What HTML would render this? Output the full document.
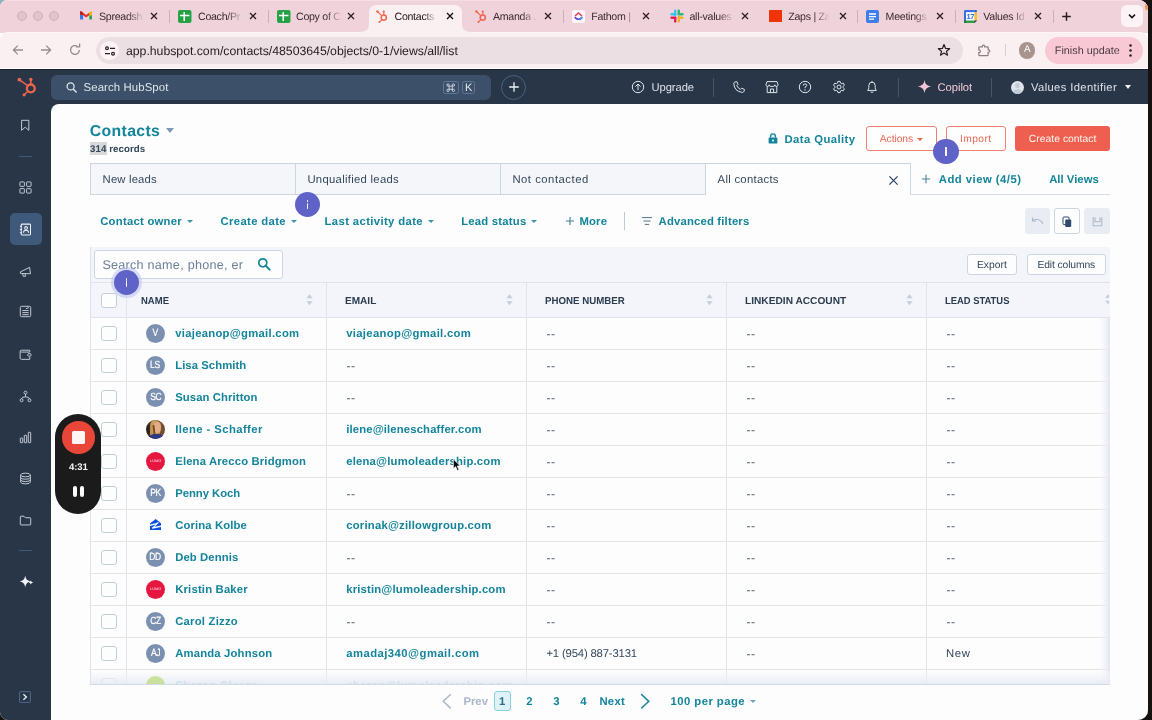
<!DOCTYPE html>
<html><head><meta charset="utf-8">
<style>
*{box-sizing:border-box;margin:0;padding:0}
html,body{text-rendering:geometricPrecision;width:1152px;height:720px;overflow:hidden;background:#17110f;font-family:"Liberation Sans",sans-serif;}
.abs{position:absolute}
#win{position:absolute;left:0;top:0;width:1148px;height:720px;background:#fdfdfe;overflow:hidden;will-change:transform;border-radius:7px 9px 10px 8px}
/* browser chrome */
#tabbar{position:absolute;left:0;top:0;width:1148px;height:33px;background:#f0d2da}
#toolbar{position:absolute;left:0;top:32px;width:1148px;height:37px;background:#faf0f1;border-top:1px solid #fdf5f6;border-bottom:1px solid #fff;border-radius:8px 8px 0 0}
.tab{position:absolute;top:0;height:32px;font-size:10.6px;color:#3a2a30;white-space:nowrap;letter-spacing:-0.27px}
.tab .t{position:absolute;top:9.7px;left:0;width:38px;overflow:hidden;height:16px;line-height:14px}
.tsep{position:absolute;top:10px;width:1px;height:13px;background:#cbb0b8}
.tx{position:absolute;top:10px;width:12px;height:12px}
#urlbar{position:absolute;left:96px;top:37px;width:867px;height:27px;border-radius:14px;background:#ecdfe4}
#url{position:absolute;left:126px;top:43.8px;font-size:12.3px;color:#251a1e;letter-spacing:0.05px;white-space:nowrap;line-height:14px}
/* hubspot nav */
#hsnav{position:absolute;left:0;top:69.3px;width:1148px;height:650.7px;background:#283648;border-top:1.6px solid #16222f}
#hsearch{position:absolute;left:51.2px;top:74.5px;width:440px;height:25.3px;border-radius:6px;background:#3d5069}
#content{position:absolute;left:51px;top:104px;width:1097px;height:616px;background:#fdfdfe;border-radius:8px 0 0 0}
.navtxt{position:absolute;color:#dce1ea;font-size:11.5px;white-space:nowrap;line-height:14px}
.nsep{position:absolute;top:78px;width:1px;height:18.5px;background:#45566b}
/* content */
.teal{color:#13849a}
.b{font-weight:bold}
.lnk{position:absolute;font-weight:bold;color:#13849a;font-size:12.3px;white-space:nowrap;line-height:16px}
.txt{position:absolute;color:#33475b;font-size:12.3px;white-space:nowrap;line-height:16px}
.caret{position:absolute;width:0;height:0;border-left:3.5px solid transparent;border-right:3.5px solid transparent;border-top:4px solid #3e95a8}
.vtab{position:absolute;top:163.3px;height:31.7px;width:206px;background:#f4f6fa;border:1px solid #ccd6e3;font-size:12.3px;color:#33475b;line-height:29px;padding-left:12px}
.btn-o{position:absolute;top:126px;height:25.4px;border:1px solid #ef7f6e;border-radius:3px;color:#ee6a58;font-size:11px;line-height:24px;text-align:center;background:#fefefe}
.sbtn{position:absolute;top:253px;height:22px;border:1px solid #cbd6e2;border-radius:3px;background:#fdfdfe;color:#33475b;font-size:11px;line-height:20px;text-align:center}
.ibtn{position:absolute;top:208px;width:26px;height:26px;border-radius:3px;background:#e9edf3}
/* table */
#tbl{position:absolute;left:90px;top:246.5px;width:1020px;height:438.5px;background:#fdfdfe;border:1px solid #dde2ea;overflow:hidden}
.th{position:absolute;top:294.8px;font-size:10.05px;font-weight:bold;color:#2b3c4f;white-space:nowrap;line-height:14px}
.vline{position:absolute;top:282px;width:1.1px;height:403px;background:#e1e2ea}
.hline{position:absolute;left:90px;width:1019px;height:1.1px;background:#e3e4e8}
.cb{position:absolute;left:101px;width:16px;height:16px;border:1.5px solid #c3cdda;border-radius:3px;background:#fdfdfe}
.av{position:absolute;left:146px;width:19.2px;height:19.2px;border-radius:50%;background:#7b90b0;color:#fff;font-size:10.4px;line-height:19.9px;text-align:center}
.av span{display:inline-block;transform:scaleX(.82);letter-spacing:-0.45px;-webkit-text-stroke:.22px #fff;margin-left:-.4px}
.dd{position:absolute;color:#485b70;font-size:12.3px;line-height:16px;letter-spacing:0.5px}
.sort{position:absolute;top:294px;width:7px;height:12px}
.ibub{position:absolute;width:25.4px;height:25.4px;border-radius:50%;background:#5f62c6}
.ibub i{position:absolute;left:11.8px;top:8.1px;width:1.9px;height:2px;background:#fff;border-radius:.6px}
.ibub b{position:absolute;left:11.8px;top:10.7px;width:1.9px;height:6.5px;background:#fff;border-radius:.4px}
</style></head><body>
<div class="abs" style="left:0;top:0;width:10px;height:10px;background:#8fafbf"></div>
<div id="win">
<div id="tabbar"></div><div class="abs" style="left:6px;top:0;width:1136px;height:1px;background:#f5dde3"></div>
<div id="toolbar"></div>
<div id="urlbar"></div>
<div id="url" style="letter-spacing:-0.030px;">app.hubspot.com/contacts/48503645/objects/0-1/views/all/list</div>
<div id="hsnav"></div>
<div id="hsearch"></div>
<div id="content"></div>
<!--CHROME_START-->
<!-- window corner bits -->
<div class="abs" style="left:1145px;top:4px;width:4px;height:6px;border-radius:2px;background:#e99a4a"></div>
<!-- traffic lights -->
<div class="abs" style="left:16.6px;top:11.3px;width:10px;height:10px;border-radius:50%;background:#dcc6cb;border:0.6px solid #ccb2b9"></div>
<div class="abs" style="left:32.6px;top:11.3px;width:10px;height:10px;border-radius:50%;background:#dcc6cb;border:0.6px solid #ccb2b9"></div>
<div class="abs" style="left:48.6px;top:11.3px;width:10px;height:10px;border-radius:50%;background:#dcc6cb;border:0.6px solid #ccb2b9"></div>
<!-- active tab -->
<svg class="abs" style="left:360px;top:0" width="112" height="33" viewBox="0 0 112 33"><path d="M0 33 L0 32 Q9 32 9 24 L9 13 Q9 5 17 5 L94 5 Q102 5 102 13 L102 24 Q102 32 111 32 L112 33 Z" fill="#faf0f1"/></svg>
<!-- tab 1 gmail -->
<svg class="abs" style="left:80.3px;top:11.3px" width="12.2" height="8.8" viewBox="0 0 14 11" preserveAspectRatio="none"><path d="M0 4.6 V10 Q0 10.6 .6 10.6 H3.6 V4.6 Z" fill="#3b78e7"/><path d="M10.6 5.4 H14 V10 Q14 10.6 13.4 10.6 H10.6 Z" fill="#2ea44f"/><path d="M10.6 1.8 L12.6 .4 Q14 .2 14 1.6 V5.4 H10.6 Z" fill="#f2b50b"/><path d="M0 1.6 Q0 .2 1.4 .4 L7 4.9 L12.6 .4 L10.6 1.8 V5.2 L7 8.2 L3.6 5.2 V4.6 H0 Z" fill="#e53027"/><path d="M0 1.6 V4.8 L3.6 4.8 L3.6 2.2 L1.5 .5 Q0 .2 0 1.6Z" fill="#b8201c"/></svg>
<div class="tab" style="left:99px"><div class="t" style="width:44px">Spreadsh</div></div>
<div class="abs" style="left:128px;top:8px;width:16px;height:16px;background:linear-gradient(90deg,rgba(240,210,218,0),#f0d2da)"></div>
<svg class="tx" style="left:148px" viewBox="0 0 12 12"><path d="M3 3 L9 9 M9 3 L3 9" stroke="#2b1c22" stroke-width="1.25" fill="none"/></svg>
<div class="tsep" style="left:169px"></div>
<!-- tab 2 sheets -->
<svg class="abs" style="left:178px;top:9.5px" width="13.5" height="13" viewBox="0 0 13.5 13"><rect x="0" y="0" width="13.5" height="13" rx="2" fill="#2da94f"/><rect x="0.6" y="0.6" width="12.3" height="11.8" rx="1.6" fill="#23a144"/><path d="M6.2 2 V11 M2 5.6 H11.5" stroke="#fff" stroke-width="1.5" fill="none"/></svg>
<div class="tab" style="left:198px"><div class="t" style="width:44px">Coach/Pr</div></div>
<div class="abs" style="left:227px;top:8px;width:16px;height:16px;background:linear-gradient(90deg,rgba(240,210,218,0),#f0d2da)"></div>
<svg class="tx" style="left:246.8px" viewBox="0 0 12 12"><path d="M3 3 L9 9 M9 3 L3 9" stroke="#2b1c22" stroke-width="1.25" fill="none"/></svg>
<div class="tsep" style="left:268px"></div>
<!-- tab 3 sheets -->
<svg class="abs" style="left:277px;top:9.5px" width="13.5" height="13" viewBox="0 0 13.5 13"><rect x="0" y="0" width="13.5" height="13" rx="2" fill="#2da94f"/><rect x="0.6" y="0.6" width="12.3" height="11.8" rx="1.6" fill="#23a144"/><path d="M6.2 2 V11 M2 5.6 H11.5" stroke="#fff" stroke-width="1.5" fill="none"/></svg>
<div class="tab" style="left:296px"><div class="t" style="width:44px">Copy of C</div></div>
<div class="abs" style="left:326px;top:8px;width:16px;height:16px;background:linear-gradient(90deg,rgba(240,210,218,0),#f0d2da)"></div>
<svg class="tx" style="left:345px" viewBox="0 0 12 12"><path d="M3 3 L9 9 M9 3 L3 9" stroke="#2b1c22" stroke-width="1.25" fill="none"/></svg>
<!-- tab 4 active hubspot -->
<svg class="abs" style="left:376px;top:9.5px" width="12" height="13" viewBox="0 0 12 13"><g fill="none" stroke="#f0644d" stroke-width="1.1"><circle cx="7.8" cy="7.6" r="2.6" stroke-width="1.5"/><path d="M1.4 1.5 L5.8 5.6 M7.8 1.6 V5 M5.8 9.6 L3.6 11.8"/></g><circle cx="1.4" cy="1.5" r="1.2" fill="#f0644d"/><circle cx="7.8" cy="1.5" r="1.1" fill="#f0644d"/><circle cx="3.4" cy="11.9" r="1" fill="#f0644d"/></svg>
<div class="tab" style="left:394.5px;color:#201418"><div class="t" style="width:42px">Contacts</div></div>
<div class="abs" style="left:424px;top:8px;width:13px;height:16px;background:linear-gradient(90deg,rgba(250,240,241,0),#faf0f1)"></div>
<svg class="tx" style="left:443.5px" viewBox="0 0 12 12"><path d="M3 3 L9 9 M9 3 L3 9" stroke="#1c1014" stroke-width="1.35" fill="none"/></svg>
<!-- tab 5 hubspot -->
<svg class="abs" style="left:474.5px;top:9.5px" width="12" height="13" viewBox="0 0 12 13"><g fill="none" stroke="#f0644d" stroke-width="1.1"><circle cx="7.8" cy="7.6" r="2.6" stroke-width="1.5"/><path d="M1.4 1.5 L5.8 5.6 M7.8 1.6 V5 M5.8 9.6 L3.6 11.8"/></g><circle cx="1.4" cy="1.5" r="1.2" fill="#f0644d"/><circle cx="7.8" cy="1.5" r="1.1" fill="#f0644d"/><circle cx="3.4" cy="11.9" r="1" fill="#f0644d"/></svg>
<div class="tab" style="left:493px"><div class="t" style="width:44px">Amanda J</div></div>
<div class="abs" style="left:522px;top:8px;width:15px;height:16px;background:linear-gradient(90deg,rgba(240,210,218,0),#f0d2da)"></div>
<svg class="tx" style="left:542px" viewBox="0 0 12 12"><path d="M3 3 L9 9 M9 3 L3 9" stroke="#2b1c22" stroke-width="1.25" fill="none"/></svg>
<div class="tsep" style="left:563px"></div>
<!-- tab 6 fathom -->
<svg class="abs" style="left:572px;top:9.5px" width="13" height="13" viewBox="0 0 13 13"><rect width="13" height="13" rx="2.5" fill="#fdf7fb"/><path d="M3.4 5.6 L6.5 3 L9.6 5.6" stroke="#e8484f" stroke-width="1.5" fill="none" stroke-linecap="round"/><path d="M3.2 7.6 Q6.5 11 9.8 7.6" stroke="#5b3fd6" stroke-width="1.6" fill="none" stroke-linecap="round"/><path d="M8.2 9.4 Q9.4 8.8 9.8 7.6" stroke="#3aa0f0" stroke-width="1.6" fill="none" stroke-linecap="round"/></svg>
<div class="tab" style="left:591.2px"><div class="t" style="width:40px">Fathom |</div></div>
<div class="abs" style="left:624px;top:8px;width:10px;height:16px;background:linear-gradient(90deg,rgba(240,210,218,0),#f0d2da)"></div>
<svg class="tx" style="left:640.2px" viewBox="0 0 12 12"><path d="M3 3 L9 9 M9 3 L3 9" stroke="#2b1c22" stroke-width="1.25" fill="none"/></svg>
<!-- tab 7 slack -->
<svg class="abs" style="left:670px;top:9px" width="14" height="14" viewBox="0 0 14 14"><g stroke-width="2.4" stroke-linecap="round" fill="none"><path d="M5.2 1.6 V6" stroke="#36c5f0"/><path d="M1.6 5.2 H5" stroke="#36c5f0"/><path d="M8.8 1.6 V5" stroke="#2eb67d"/><path d="M8.8 5.2 H12.4" stroke="#2eb67d"/><path d="M8.8 8 V12.4" stroke="#ecb22e"/><path d="M9 8.8 H12.4" stroke="#ecb22e"/><path d="M5.2 9 V12.4" stroke="#e01e5a"/><path d="M1.6 8.8 H5.2" stroke="#e01e5a"/></g></svg>
<div class="tab" style="left:689.5px"><div class="t" style="width:44px">all-values</div></div>
<div class="abs" style="left:719px;top:8px;width:15px;height:16px;background:linear-gradient(90deg,rgba(240,210,218,0),#f0d2da)"></div>
<svg class="tx" style="left:738.6px" viewBox="0 0 12 12"><path d="M3 3 L9 9 M9 3 L3 9" stroke="#2b1c22" stroke-width="1.25" fill="none"/></svg>
<!-- tab 8 zapier -->
<div class="abs" style="left:768.8px;top:9.5px;width:13px;height:12.6px;background:#f03504;border-radius:.5px"></div>
<div class="tab" style="left:788.3px"><div class="t" style="width:42px">Zaps | Za</div></div>
<div class="abs" style="left:814px;top:8px;width:16px;height:16px;background:linear-gradient(90deg,rgba(240,210,218,0),#f0d2da)"></div>
<svg class="tx" style="left:836.5px" viewBox="0 0 12 12"><path d="M3 3 L9 9 M9 3 L3 9" stroke="#2b1c22" stroke-width="1.25" fill="none"/></svg>
<div class="tsep" style="left:857px"></div>
<!-- tab 9 docs -->
<svg class="abs" style="left:866.2px;top:9.5px" width="13" height="13" viewBox="0 0 13 13"><rect width="13" height="13" rx="2" fill="#3f7de8"/><path d="M3 4 H10 M3 6.6 H10 M3 9.2 H8" stroke="#fff" stroke-width="1.3"/></svg>
<div class="tab" style="left:885.6px"><div class="t" style="width:44px">Meetings</div></div>
<div class="abs" style="left:914px;top:8px;width:15px;height:16px;background:linear-gradient(90deg,rgba(240,210,218,0),#f0d2da)"></div>
<svg class="tx" style="left:934px" viewBox="0 0 12 12"><path d="M3 3 L9 9 M9 3 L3 9" stroke="#2b1c22" stroke-width="1.25" fill="none"/></svg>
<div class="tsep" style="left:955px"></div>
<!-- tab 10 calendar -->
<svg class="abs" style="left:963.9px;top:9.7px" width="13.6" height="13" viewBox="0 0 13.4 13.4" preserveAspectRatio="none"><path d="M1.2 0 H10.4 V13.4 H1.2 Q0 13.4 0 12.2 V1.2 Q0 0 1.2 0Z" fill="#3b6fe0"/><rect x="10.4" y="0" width="2.2" height="2.4" fill="#1a5cd6"/><rect x="10.2" y="2.4" width="3.2" height="8.4" fill="#fbc116"/><rect x="0" y="10.8" width="10.4" height="2.6" fill="#2ea043"/><path d="M10.4 10.8 H13.2 L10.4 13.4Z" fill="#3a3a2a"/><rect x="0" y="10.8" width="2" height="2.6" fill="#1d7a33"/><rect x="2" y="2.2" width="8.3" height="8.6" fill="#fbfdff"/><text x="6.2" y="9.4" font-family="Liberation Sans" font-size="7.4" font-weight="bold" fill="#2f6fe0" text-anchor="middle" letter-spacing="-.3">17</text></svg>
<div class="tab" style="left:983.3px"><div class="t" style="width:44px">Values Id</div></div>
<div class="abs" style="left:1012px;top:8px;width:15px;height:16px;background:linear-gradient(90deg,rgba(240,210,218,0),#f0d2da)"></div>
<svg class="tx" style="left:1031.5px" viewBox="0 0 12 12"><path d="M3 3 L9 9 M9 3 L3 9" stroke="#2b1c22" stroke-width="1.25" fill="none"/></svg>
<div class="tsep" style="left:1052.5px"></div>
<svg class="abs" style="left:1060px;top:10px" width="13" height="13" viewBox="0 0 13 13"><path d="M6.5 2.2 V10.8 M2.2 6.5 H10.8" stroke="#2b1c22" stroke-width="1.5" fill="none"/></svg>
<div class="abs" style="left:1121px;top:5px;width:22px;height:22px;border-radius:6px;background:#fdf2f6"></div>
<svg class="abs" style="left:1127px;top:11px" width="10" height="10" viewBox="0 0 10 10"><path d="M2 3.6 L5 6.6 L8 3.6" stroke="#1e1216" stroke-width="1.5" fill="none"/></svg>
<!-- toolbar icons -->
<svg class="abs" style="left:11px;top:43px" width="14" height="14" viewBox="0 0 14 14"><path d="M12 7 H2.6 M6.8 2.6 L2.4 7 L6.8 11.4" stroke="#9a8a8f" stroke-width="1.3" fill="none"/></svg>
<svg class="abs" style="left:39px;top:43px" width="14" height="14" viewBox="0 0 14 14"><path d="M2 7 H11.4 M7.2 2.6 L11.6 7 L7.2 11.4" stroke="#9a8a8f" stroke-width="1.3" fill="none"/></svg>
<svg class="abs" style="left:68px;top:43px" width="14" height="14" viewBox="0 0 14 14"><path d="M11.4 7 A4.4 4.4 0 1 1 9.6 3.4" stroke="#9a8a8f" stroke-width="1.3" fill="none"/><path d="M8 3.9 H11.6 V.6" stroke="#9a8a8f" stroke-width="1.3" fill="none"/></svg>
<div class="abs" style="left:100px;top:41px;width:19px;height:19px;border-radius:50%;background:#fdf3f5"></div>
<svg class="abs" style="left:103.5px;top:44.5px" width="12" height="12" viewBox="0 0 12 12"><g stroke="#2b1c22" stroke-width="1.2" fill="none"><circle cx="3" cy="3.3" r="1.4"/><path d="M6 3.3 H11"/><circle cx="9" cy="8.7" r="1.4"/><path d="M1 8.7 H6"/></g></svg>
<svg class="abs" style="left:937px;top:43px" width="14" height="14" viewBox="0 0 14 14"><path d="M7 1.6 L8.6 5.4 L12.6 5.7 L9.5 8.3 L10.5 12.2 L7 10.1 L3.5 12.2 L4.5 8.3 L1.4 5.7 L5.4 5.4 Z" stroke="#2b1c22" stroke-width="1.2" fill="none" stroke-linejoin="round"/></svg>
<svg class="abs" style="left:977px;top:43px" width="15" height="14" viewBox="0 0 15 14"><path d="M2.6 3.8 H5.3 V3.3 Q5.3 2.1 6.5 2.1 Q7.7 2.1 7.7 3.3 V3.8 H10.4 Q11.2 3.8 11.2 4.6 V6.9 H11.7 Q12.8 6.9 12.8 8.1 Q12.8 9.3 11.7 9.3 H11.2 V11.8 Q11.2 12.6 10.4 12.6 H2.6 Q1.8 12.6 1.8 11.8 V9.5 H2.3 Q3.4 9.5 3.4 8.2 Q3.4 6.9 2.3 6.9 H1.8 V4.6 Q1.8 3.8 2.6 3.8 Z" stroke="#8e7e84" stroke-width="1.25" fill="none"/></svg>
<div class="abs" style="left:1005px;top:44px;width:1px;height:12px;background:#dccbd0"></div>
<div class="abs" style="left:1019px;top:42.3px;width:16.4px;height:16.4px;border-radius:50%;background:#a8948c;color:#fff;font-size:9.8px;line-height:16.8px;text-align:center">A</div>
<div class="abs" style="left:1045px;top:37px;width:98px;height:27px;border-radius:14px;background:#f8c9d5"></div>
<div class="abs" style="letter-spacing:0.013px;left:1054.8px;top:44.2px;font-size:10.8px;color:#4a3a40;line-height:14px;white-space:nowrap">Finish update</div>
<svg class="abs" style="left:1128px;top:43px" width="5" height="15" viewBox="0 0 5 15"><circle cx="2.5" cy="2.6" r="1.25" fill="#2b1c22"/><circle cx="2.5" cy="7.5" r="1.25" fill="#2b1c22"/><circle cx="2.5" cy="12.4" r="1.25" fill="#2b1c22"/></svg>
<!--CHROME_END-->
<!--NAV_START-->
<!-- hubspot logo -->
<svg class="abs" style="left:16px;top:76px" width="22" height="22" viewBox="0 0 22 22"><g fill="none" stroke="#f0644d"><circle cx="14.8" cy="12.4" r="3.9" stroke-width="2.3"/><path d="M3.6 3.9 L11.6 9.6" stroke-width="1.3"/><path d="M14.8 3.6 V8" stroke-width="1.6"/><path d="M11.8 15.4 L8.4 18.6" stroke-width="1.4"/></g><circle cx="3.4" cy="3.7" r="1.9" fill="#f0644d"/><circle cx="14.8" cy="3.4" r="1.7" fill="#f0644d"/><circle cx="8.1" cy="18.8" r="1.6" fill="#f0644d"/></svg>
<!-- search -->
<svg class="abs" style="left:65px;top:81px" width="13" height="13" viewBox="0 0 13 13"><circle cx="5.6" cy="5.4" r="3.5" stroke="#dfe5ec" stroke-width="1.3" fill="none"/><path d="M8.2 8 L11.6 11.4" stroke="#dfe5ec" stroke-width="1.4"/></svg>
<div class="navtxt" style="letter-spacing:0.100px;left:83.5px;top:80.8px;font-size:11.4px;color:#dfe5ec">Search HubSpot</div>
<div class="abs" style="left:443.2px;top:80.8px;width:15.6px;height:13px;border:1px solid #5f7694;border-radius:2.5px"></div>
<svg class="abs" style="left:446.3px;top:82.6px" width="9.4" height="9.4" viewBox="0 0 9 9"><path d="M3 3 H6 V6 H3 Z M3 3 H2.2 A1.1 1.1 0 1 1 3 2.2 Z M6 3 V2.2 A1.1 1.1 0 1 1 6.8 3 Z M6 6 H6.8 A1.1 1.1 0 1 1 6 6.8 Z M3 6 V6.8 A1.1 1.1 0 1 1 2.2 6 Z" stroke="#dfe5ec" stroke-width=".8" fill="none"/></svg>
<div class="abs" style="left:462.3px;top:80.8px;width:12.8px;height:13px;border:1px solid #5f7694;border-radius:2.5px;color:#e6ebf1;font-size:11px;line-height:12.6px;text-align:center">K</div>
<div class="abs" style="left:501px;top:74.5px;width:25.2px;height:25.2px;border-radius:50%;border:1px solid #4d627c"></div>
<svg class="abs" style="left:507.6px;top:81.1px" width="12" height="12" viewBox="0 0 12 12"><path d="M6 1.2 V10.8 M1.2 6 H10.8" stroke="#eef1f5" stroke-width="1.3"/></svg>
<!-- upgrade -->
<svg class="abs" style="left:631px;top:79.9px" width="14" height="14" viewBox="0 0 14 14"><circle cx="7" cy="7" r="5.7" stroke="#dfe5ec" stroke-width="1" fill="none"/><path d="M7 10.2 V4.2 M4.4 6.6 L7 4 L9.6 6.6" stroke="#dfe5ec" stroke-width="1" fill="none"/></svg>
<div class="navtxt" style="letter-spacing:-0.060px;left:651.5px;top:80.8px;font-size:11.2px">Upgrade</div>
<div class="nsep" style="left:713px"></div>
<!-- phone -->
<svg class="abs" style="left:732px;top:79.9px" width="14" height="14" viewBox="0 0 14 14"><path d="M3 2 L4.8 1.6 L6 4.4 L4.8 5.6 Q6 8.2 8.4 9.4 L9.6 8.2 L12.4 9.4 L12 11.4 Q11.6 12.4 10.4 12.4 Q6.4 12 4 9.6 Q2 7.2 1.8 3.6 Q1.8 2.4 3 2 Z" stroke="#dfe5ec" stroke-width="1" fill="none" stroke-linejoin="round"/></svg>
<!-- marketplace -->
<svg class="abs" style="left:764.5px;top:79.9px" width="14" height="14" viewBox="0 0 14 14"><g stroke="#dfe5ec" stroke-width="1" fill="none" stroke-linejoin="round"><path d="M2 1.6 H12 L13 4.6 Q13 6.4 11.4 6.4 Q9.8 6.4 9.8 4.8 Q9.8 6.4 8.4 6.4 H5.6 Q4.2 6.4 4.2 4.8 Q4.2 6.4 2.6 6.4 Q1 6.4 1 4.6 Z"/><path d="M2.2 6.4 V12.6 H11.8 V6.4"/><path d="M5.4 12.6 V9 H8.6 V12.6"/></g></svg>
<!-- help -->
<svg class="abs" style="left:798px;top:79.9px" width="14" height="14" viewBox="0 0 14 14"><circle cx="7" cy="7" r="5.7" stroke="#dfe5ec" stroke-width="1" fill="none"/><path d="M5.2 5.6 Q5.2 3.9 7 3.9 Q8.8 3.9 8.8 5.4 Q8.8 6.4 7 7.2 V8.2" stroke="#dfe5ec" stroke-width="1" fill="none"/><circle cx="7" cy="10" r=".7" fill="#dfe5ec"/></svg>
<!-- settings -->
<svg class="abs" style="left:831.5px;top:79.9px" width="14" height="14" viewBox="0 0 14 14"><g stroke="#dfe5ec" stroke-width="1" fill="none" stroke-linejoin="round"><circle cx="7" cy="7" r="2"/><path d="M5.9 1.4 H8.1 L8.5 3 L9.7 3.7 L11.3 3.2 L12.4 5.1 L11.2 6.3 V7.7 L12.4 8.9 L11.3 10.8 L9.7 10.3 L8.5 11 L8.1 12.6 H5.9 L5.5 11 L4.3 10.3 L2.7 10.8 L1.6 8.9 L2.8 7.7 V6.3 L1.6 5.1 L2.7 3.2 L4.3 3.7 L5.5 3 Z"/></g></svg>
<!-- bell -->
<svg class="abs" style="left:865px;top:79.9px" width="14" height="14" viewBox="0 0 14 14"><g stroke="#dfe5ec" stroke-width="1" fill="none" stroke-linejoin="round"><path d="M2.6 10.4 Q3.8 9.4 3.8 7.6 V5.6 Q3.8 2.2 7 2.2 Q10.2 2.2 10.2 5.6 V7.6 Q10.2 9.4 11.4 10.4 Z"/><path d="M5.6 11.8 Q7 13 8.4 11.8"/><path d="M7 2.2 V1"/></g></svg>
<div class="nsep" style="left:898px"></div>
<!-- copilot -->
<svg class="abs" style="left:917px;top:79.4px" width="15" height="15" viewBox="0 0 15 15"><path d="M7.5 1 Q8.1 6.9 14 7.5 Q8.1 8.1 7.5 14 Q6.9 8.1 1 7.5 Q6.9 6.9 7.5 1 Z" fill="#f6c3d4"/></svg>
<div class="navtxt" style="letter-spacing:-0.033px;left:937.5px;top:80.8px;font-size:11.2px;color:#f3cbd9">Copilot</div>
<div class="nsep" style="left:991px"></div>
<div class="abs" style="left:1011px;top:80.5px;width:13px;height:13px;border-radius:50%;background:#dfe5ec;overflow:hidden"><div class="abs" style="left:4.2px;top:2.6px;width:4.6px;height:4.6px;border-radius:50%;background:#c2cad6"></div><div class="abs" style="left:2px;top:8px;width:9px;height:8px;border-radius:50%;background:#c2cad6"></div></div>
<div class="navtxt" style="letter-spacing:0.388px;left:1031px;top:80.8px;font-size:11.2px">Values Identifier</div>
<div class="caret" style="left:1125.3px;top:85.4px;border-top-color:#eef1f5"></div>
<!--NAV_END-->
<!--SIDEBAR_START-->
<!-- sidebar -->
<svg class="abs" style="left:19px;top:119.2px" width="13" height="13" viewBox="0 0 14 14"><path d="M2.8 1.4 H10.6 V12.2 L6.7 8.8 L2.8 12.2 Z" stroke="#cdd4de" stroke-width="1" fill="none" stroke-linejoin="miter"/></svg>
<div class="abs" style="left:19px;top:156px;width:13px;height:1px;background:#3f5a78"></div>
<svg class="abs" style="left:19px;top:181.0px" width="13" height="13" viewBox="0 0 14 14"><g stroke="#cdd4de" stroke-width="1" fill="none"><rect x="1" y="1" width="4.8" height="4.8" rx=".6"/><rect x="8.2" y="1" width="4.8" height="4.8" rx=".6"/><rect x="1" y="8.2" width="4.8" height="4.8" rx=".6"/><rect x="8.2" y="8.2" width="4.8" height="4.8" rx=".6"/></g></svg>
<div class="abs" style="left:9.6px;top:213px;width:32px;height:31.6px;border-radius:5px;background:#3f597a"></div>
<svg class="abs" style="left:19px;top:222.5px" width="13" height="13" viewBox="0 0 14 14"><g stroke="#eef1f6" stroke-width="1.1" fill="none"><rect x="2.4" y="1.2" width="10" height="11.6" rx="1"/><circle cx="7.6" cy="5.4" r="1.5"/><path d="M4.8 10.4 Q4.8 7.8 7.6 7.8 Q10.4 7.8 10.4 10.4"/><path d="M1 3.6 H3 M1 7 H3 M1 10.4 H3"/></g></svg>
<svg class="abs" style="left:19px;top:264.5px" width="13" height="13" viewBox="0 0 14 14"><g stroke="#cdd4de" stroke-width="1" fill="none" stroke-linejoin="round"><path d="M1.4 7.4 L11.4 2.6 L12.4 9.4 L1.8 9.2 Z"/><path d="M4 9.4 L4.6 12.2 H7 L6.6 9.4"/></g></svg>
<svg class="abs" style="left:19px;top:305.4px" width="13" height="13" viewBox="0 0 14 14"><g stroke="#cdd4de" stroke-width="1" fill="none"><rect x="1.4" y="1.4" width="11.2" height="11.2" rx="1.4"/><path d="M3.6 6 H10.4 M3.6 8.2 H10.4 M3.6 10.4 H10.4 M7.4 4 L10.6 2.8"/></g></svg>
<svg class="abs" style="left:19px;top:347.5px" width="13" height="13" viewBox="0 0 14 14"><g stroke="#cdd4de" stroke-width="1" fill="none" stroke-linejoin="round"><path d="M11.6 4.2 V2.4 H2.6 Q1.2 2.4 1.2 3.8 V10.8 Q1.2 12.2 2.6 12.2 H11.6 V9.6"/><path d="M1.4 3.8 Q1.4 4.4 2.6 4.4 H11.6"/><rect x="9.4" y="6" width="3.6" height="2.8" rx="1.2"/></g></svg>
<svg class="abs" style="left:19px;top:389.5px" width="13" height="13" viewBox="0 0 14 14"><g stroke="#cdd4de" stroke-width="1" fill="none"><circle cx="7" cy="2.8" r="1.6"/><circle cx="2.8" cy="11" r="1.6"/><circle cx="11.2" cy="11" r="1.6"/><path d="M7 4.4 V7.4 M2.8 9.4 Q2.8 7.4 7 7.4 Q11.2 7.4 11.2 9.4"/></g></svg>
<svg class="abs" style="left:19px;top:430.5px" width="13" height="13" viewBox="0 0 14 14"><g stroke="#cdd4de" stroke-width="1" fill="none"><rect x="1.4" y="7.6" width="2.6" height="5" rx=".5"/><rect x="5.7" y="4.6" width="2.6" height="8" rx=".5"/><rect x="10" y="1.4" width="2.6" height="11.2" rx=".5"/></g></svg>
<svg class="abs" style="left:19px;top:472.0px" width="13" height="13" viewBox="0 0 14 14"><g stroke="#cdd4de" stroke-width="1" fill="none"><ellipse cx="7" cy="3.2" rx="5.2" ry="2"/><path d="M1.8 3.2 V10.8 Q1.8 12.8 7 12.8 Q12.2 12.8 12.2 10.8 V3.2"/><path d="M1.8 5.8 Q1.8 7.8 7 7.8 Q12.2 7.8 12.2 5.8 M1.8 8.3 Q1.8 10.3 7 10.3 Q12.2 10.3 12.2 8.3"/></g></svg>
<svg class="abs" style="left:19px;top:513.5px" width="13" height="13" viewBox="0 0 14 14"><path d="M1.4 3.2 Q1.4 2.4 2.2 2.4 H5.4 L6.8 4 H11.8 Q12.6 4 12.6 4.8 V11 Q12.6 11.8 11.8 11.8 H2.2 Q1.4 11.8 1.4 11 Z" stroke="#cdd4de" stroke-width="1" fill="none" stroke-linejoin="round"/></svg>
<div class="abs" style="left:19px;top:550px;width:13px;height:1px;background:#3f5a78"></div>
<svg class="abs" style="left:18.5px;top:574px" width="15" height="15" viewBox="0 0 15 15"><path d="M6.2 1.6 Q6.8 6.9 12 7.5 Q6.8 8.1 6.2 13.4 Q5.6 8.1 .6 7.5 Q5.6 6.9 6.2 1.6 Z" fill="#eef1f6"/><path d="M11.8 6.2 Q12 8.1 14.2 8.4 Q12 8.7 11.8 10.6 Q11.6 8.7 9.6 8.4 Q11.6 8.1 11.8 6.2Z" fill="#eef1f6"/></svg>
<svg class="abs" style="left:19px;top:691.4px" width="12" height="12" viewBox="0 0 12 12"><rect x=".6" y=".6" width="10.8" height="10.8" rx=".6" stroke="#50698a" stroke-width="1" fill="none"/><path d="M4.4 3.2 L7.4 6 L4.4 8.8" stroke="#eef1f6" stroke-width="1.3" fill="none"/></svg>
<!--SIDEBAR_END-->
<!--HEADER_START-->
<!-- title -->
<div class="abs b" style="letter-spacing:0.351px;left:89.8px;top:122.1px;font-size:15.8px;line-height:20px;color:#13849a;white-space:nowrap">Contacts</div>
<div class="caret" style="left:166px;top:128.3px;border-left-width:4.7px;border-right-width:4.7px;border-top-width:5.2px;border-top-color:#7d97b4"></div>
<div class="abs" style="left:89.5px;top:141.5px;width:17px;height:13px;background:#d9d9da"></div>
<div class="abs b" style="letter-spacing:0.081px;left:90px;top:142.8px;font-size:9.7px;line-height:14px;color:#33475b;white-space:nowrap">314 records</div>
<!-- data quality -->
<svg class="abs" style="left:767.5px;top:133px" width="10" height="11" viewBox="0 0 10 11"><rect x=".6" y="4.4" width="8.8" height="6.2" rx="1.2" fill="#13849a"/><path d="M2.6 4.6 V3.2 Q2.6 .9 5 .9 Q7.4 .9 7.4 3.2 V4.6" stroke="#13849a" stroke-width="1.4" fill="none"/><circle cx="5" cy="7.4" r="1" fill="#fdfdfe"/></svg>
<div class="lnk" style="letter-spacing:0.423px;left:784.5px;top:131.7px;font-size:11.3px">Data Quality</div>
<div class="btn-o" style="left:866px;width:70.5px"></div>
<div class="abs" style="letter-spacing:-0.083px;left:879.8px;top:133.2px;font-size:10.3px;line-height:14px;color:#ec6753;white-space:nowrap">Actions</div>
<div class="caret" style="left:917px;top:137.5px;border-left-width:3px;border-right-width:3px;border-top-width:3.5px;border-top-color:#ec6753"></div>
<div class="btn-o" style="left:946px;width:59.6px"></div>
<div class="abs" style="letter-spacing:0.402px;left:960px;top:133.2px;font-size:10.3px;line-height:14px;color:#ec6753;white-space:nowrap">Import</div>
<div class="abs" style="left:1015px;top:126px;width:94.6px;height:25.4px;border-radius:3px;background:#ef5f4f"></div>
<div class="abs" style="letter-spacing:0.045px;left:1028.8px;top:133.2px;font-size:10.3px;line-height:14px;color:#fff6f2;white-space:nowrap">Create contact</div>
<!-- view tabs -->
<div class="vtab" style="left:89.5px;width:206px"></div>
<div class="vtab" style="left:294.5px;width:206px"></div>
<div class="vtab" style="left:499.5px;width:206px"></div>
<div class="abs" style="left:704.5px;top:163.3px;width:206px;height:31.7px;background:#fdfdfe;border:1px solid #ccd6e3;border-bottom:none"></div>
<div class="abs" style="left:910px;top:194px;width:200px;height:1px;background:#d5dde8"></div>
<div class="txt" style="letter-spacing:0.161px;left:102.6px;top:171.5px;font-size:11.3px">New leads</div>
<div class="txt" style="letter-spacing:0.290px;left:307.4px;top:171.5px;font-size:11.3px">Unqualified leads</div>
<div class="txt" style="letter-spacing:0.514px;left:512.4px;top:171.5px;font-size:11.3px">Not contacted</div>
<div class="txt" style="letter-spacing:0.286px;left:717.6px;top:171.5px;font-size:11.3px">All contacts</div>
<svg class="abs" style="left:887.5px;top:175px" width="11" height="11" viewBox="0 0 11 11"><path d="M1.4 1.4 L9.6 9.6 M9.6 1.4 L1.4 9.6" stroke="#2e4a66" stroke-width="1.3" fill="none"/></svg>
<svg class="abs" style="left:921px;top:174px" width="10" height="10" viewBox="0 0 10 10"><path d="M5 .8 V9.2 M.8 5 H9.2" stroke="#4b7f99" stroke-width="1.1"/></svg>
<div class="lnk" style="letter-spacing:0.474px;left:938.8px;top:172px;font-size:11.3px">Add view (4/5)</div>
<div class="lnk" style="letter-spacing:0.022px;left:1049.2px;top:172px;font-size:11.3px">All Views</div>
<!-- filters -->
<div class="lnk" style="letter-spacing:0.256px;left:100.2px;top:213.7px;font-size:11.3px">Contact owner</div>
<div class="caret" style="left:186.5px;top:219.5px;border-left-width:3px;border-right-width:3px;border-top-width:3.5px"></div>
<div class="lnk" style="letter-spacing:0.350px;left:220.6px;top:213.7px;font-size:11.3px">Create date</div>
<div class="caret" style="left:291px;top:219.5px;border-left-width:3px;border-right-width:3px;border-top-width:3.5px"></div>
<div class="lnk" style="letter-spacing:0.374px;left:324.6px;top:213.7px;font-size:11.3px">Last activity date</div>
<div class="caret" style="left:428px;top:219.5px;border-left-width:3px;border-right-width:3px;border-top-width:3.5px"></div>
<div class="lnk" style="letter-spacing:0.220px;left:461.2px;top:213.7px;font-size:11.3px">Lead status</div>
<div class="caret" style="left:531px;top:219.5px;border-left-width:3px;border-right-width:3px;border-top-width:3.5px"></div>
<svg class="abs" style="left:565px;top:216px" width="10" height="10" viewBox="0 0 10 10"><path d="M5 1 V9 M1 5 H9" stroke="#3c8397" stroke-width="1.1"/></svg>
<div class="lnk" style="letter-spacing:0.200px;left:579.4px;top:213.7px;font-size:11.3px">More</div>
<div class="abs" style="left:624px;top:212px;width:1px;height:18px;background:#bcc8d7"></div>
<svg class="abs" style="left:641px;top:216px" width="12" height="10" viewBox="0 0 12 10"><path d="M1 1.6 H11 M2.4 5 H9.6 M3.8 8.4 H8.2" stroke="#54748c" stroke-width="1"/></svg>
<div class="lnk" style="letter-spacing:0.181px;left:658.6px;top:213.7px;font-size:11.3px">Advanced filters</div>
<!-- icon buttons -->
<div class="ibtn" style="left:1024.8px;width:25.6px;height:25.6px"></div>
<svg class="abs" style="left:1031px;top:216.4px" width="13" height="11" viewBox="0 0 13 11"><path d="M2 4.6 Q6 1.4 10.6 5.6 Q11.4 6.6 11.6 8" stroke="#a9b5c5" stroke-width="1.1" fill="none"/><path d="M1.6 1.6 V5 H5" stroke="#a9b5c5" stroke-width="1.1" fill="none"/></svg>
<div class="ibtn" style="left:1054.2px;width:25.6px;height:25.6px;background:#fdfdfe;border:1px solid #cbd6e2"></div>
<svg class="abs" style="left:1062px;top:215.5px" width="10" height="12" viewBox="0 0 10 12"><rect x="1" y="1" width="6" height="7.6" rx="1" fill="none" stroke="#2f4a6e" stroke-width="1"/><rect x="3.2" y="3.4" width="6" height="7.6" rx="1" fill="#2f4a6e"/></svg>
<div class="ibtn" style="left:1084.2px;width:25.6px;height:25.6px"></div>
<svg class="abs" style="left:1091.5px;top:216px" width="11" height="11" viewBox="0 0 11 11"><path d="M1.2 1.2 V9.8 H9.8 V1.2 M3 1.2 V5.8 H8 V1.2" stroke="#aeb9c8" stroke-width="1.1" fill="none"/></svg>
<!--HEADER_END-->
<!--TABLE_START-->
<div id="tbl"></div>
<div class="abs" style="left:90.5px;top:247px;width:1019px;height:35px;background:#f3f5fa"></div>
<div class="abs" style="left:90.5px;top:281.7px;width:1019px;height:36px;background:#f3f5fa;border-top:1px solid #dfe3eb;border-bottom:1px solid #dfe3eb"></div>
<div class="abs" style="left:93.5px;top:250.2px;width:189px;height:28.4px;background:#fdfdfe;border:1px solid #cbd6e2;border-radius:3px"></div>
<div class="abs" style="left:102.4px;top:255.6px;width:141.5px;height:18px;overflow:hidden"><div class="abs" style="letter-spacing:0.258px;left:0;top:0;font-size:12.6px;line-height:18px;color:#6c8097;white-space:nowrap">Search name, phone, er</div></div>
<svg class="abs" style="left:256.5px;top:257px" width="14" height="14" viewBox="0 0 14 14"><circle cx="5.8" cy="5.8" r="4" stroke="#13849a" stroke-width="1.7" fill="none"/><path d="M8.8 8.8 L12.6 12.6" stroke="#13849a" stroke-width="2" stroke-linecap="round"/></svg>
<div class="sbtn" style="left:966.5px;top:254px;width:50.5px;height:20.6px"></div>
<div class="abs" style="letter-spacing:0.006px;left:977px;top:258.5px;font-size:10.3px;line-height:14px;color:#33475b;white-space:nowrap">Export</div>
<div class="sbtn" style="left:1027px;top:254px;width:78.6px;height:20.6px"></div>
<div class="abs" style="letter-spacing:-0.104px;left:1037.4px;top:258.5px;font-size:10.3px;line-height:14px;color:#33475b;white-space:nowrap">Edit columns</div>
<div class="th" style="transform:scale(0.9461,1);transform-origin:0 50%;left:141px">NAME</div>
<div class="th" style="transform:scale(1.0011,1);transform-origin:0 50%;left:345px">EMAIL</div>
<div class="th" style="transform:scale(0.9646,1);transform-origin:0 50%;left:545px">PHONE NUMBER</div>
<div class="th" style="transform:scale(1.0111,1);transform-origin:0 50%;left:745.2px">LINKEDIN ACCOUNT</div>
<div class="th" style="transform:scale(0.9355,1);transform-origin:0 50%;left:945.1px">LEAD STATUS</div>
<div class="abs" style="left:1105.4px;top:293.8px;width:3.6px;height:11px;overflow:hidden"><svg class="abs" style="left:0;top:0" width="6" height="11" viewBox="0 0 6 11"><path d="M3 .3 L5.8 3.9 H.2 Z M3 10.3 L5.8 6.7 H.2 Z" fill="#c3cddb"/></svg></div>
<svg class="sort" style="left:305.9px;top:293.8px" width="6" height="11" viewBox="0 0 6 11"><path d="M3 .3 L5.8 3.9 H.2 Z M3 10.3 L5.8 6.7 H.2 Z" fill="#c3cddb"/></svg>
<svg class="sort" style="left:505.8px;top:293.8px" width="6" height="11" viewBox="0 0 6 11"><path d="M3 .3 L5.8 3.9 H.2 Z M3 10.3 L5.8 6.7 H.2 Z" fill="#c3cddb"/></svg>
<svg class="sort" style="left:705.8px;top:293.8px" width="6" height="11" viewBox="0 0 6 11"><path d="M3 .3 L5.8 3.9 H.2 Z M3 10.3 L5.8 6.7 H.2 Z" fill="#c3cddb"/></svg>
<svg class="sort" style="left:906.0px;top:293.8px" width="6" height="11" viewBox="0 0 6 11"><path d="M3 .3 L5.8 3.9 H.2 Z M3 10.3 L5.8 6.7 H.2 Z" fill="#c3cddb"/></svg>
<div class="cb" style="top:292.5px;left:101.4px;width:15.5px;height:15.2px"></div>
<div class="vline" style="left:126px;top:282px;height:402px"></div>
<div class="vline" style="left:326px;top:282px;height:402px"></div>
<div class="vline" style="left:526px;top:282px;height:402px"></div>
<div class="vline" style="left:726px;top:282px;height:402px"></div>
<div class="vline" style="left:926px;top:282px;height:402px"></div>
<div class="hline" style="top:348.8px"></div>
<div class="cb" style="top:326.0px;left:101.4px;width:15.5px;height:15.2px"></div>
<div class="av" style="top:323.8px"><span>V</span></div>
<div class="lnk" style="letter-spacing:0.274px;left:175.2px;top:325.8px;font-size:11.3px">viajeanop@gmail.com</div>
<div class="lnk" style="letter-spacing:0.316px;left:346.2px;top:325.8px;font-size:11.3px">viajeanop@gmail.com</div>
<div class="dd" style="left:546.4px;top:325.8px">--</div>
<div class="dd" style="left:746.4px;top:325.8px">--</div>
<div class="dd" style="left:946.4px;top:325.8px">--</div>
<div class="hline" style="top:380.8px"></div>
<div class="cb" style="top:358.0px;left:101.4px;width:15.5px;height:15.2px"></div>
<div class="av" style="top:355.8px"><span>LS</span></div>
<div class="lnk" style="letter-spacing:0.066px;left:175.2px;top:357.8px;font-size:11.3px">Lisa Schmith</div>
<div class="dd" style="left:346.4px;top:357.8px">--</div>
<div class="dd" style="left:546.4px;top:357.8px">--</div>
<div class="dd" style="left:746.4px;top:357.8px">--</div>
<div class="dd" style="left:946.4px;top:357.8px">--</div>
<div class="hline" style="top:412.8px"></div>
<div class="cb" style="top:390.0px;left:101.4px;width:15.5px;height:15.2px"></div>
<div class="av" style="top:387.8px"><span>SC</span></div>
<div class="lnk" style="letter-spacing:0.102px;left:175.2px;top:389.8px;font-size:11.3px">Susan Chritton</div>
<div class="dd" style="left:346.4px;top:389.8px">--</div>
<div class="dd" style="left:546.4px;top:389.8px">--</div>
<div class="dd" style="left:746.4px;top:389.8px">--</div>
<div class="dd" style="left:946.4px;top:389.8px">--</div>
<div class="hline" style="top:444.8px"></div>
<div class="cb" style="top:422.0px;left:101.4px;width:15.5px;height:15.2px"></div>
<div class="av" style="top:419.8px;background:linear-gradient(90deg,#2b1d15 0%,#3a2a1e 22%,#7a5232 80%,#6a4a30 100%);overflow:hidden"><div class="abs" style="left:3.6px;top:.4px;width:10.4px;height:17px;border-radius:5px 5px 2px 2px;background:linear-gradient(90deg,#b98c4e,#d1a663 45%,#a87a40)"></div><div class="abs" style="left:8.4px;top:2.4px;width:6.8px;height:11px;border-radius:45%;background:#e3ae85"></div><div class="abs" style="left:6.8px;top:5px;width:2.4px;height:10px;background:#7a4f28;border-radius:1px;transform:rotate(-6deg)"></div><div class="abs" style="left:2.6px;top:13.8px;width:15px;height:8px;border-radius:40% 40% 0 0;background:#2c3b86"></div></div>
<div class="lnk" style="letter-spacing:0.412px;left:175.2px;top:421.8px;font-size:11.3px">Ilene - Schaffer</div>
<div class="lnk" style="letter-spacing:0.143px;left:346.2px;top:421.8px;font-size:11.3px">ilene@ileneschaffer.com</div>
<div class="dd" style="left:546.4px;top:421.8px">--</div>
<div class="dd" style="left:746.4px;top:421.8px">--</div>
<div class="dd" style="left:946.4px;top:421.8px">--</div>
<div class="hline" style="top:476.8px"></div>
<div class="cb" style="top:454.0px;left:101.4px;width:15.5px;height:15.2px"></div>
<div class="av" style="top:451.8px;background:#e5173f;font-size:3.7px;letter-spacing:.15px;color:rgba(255,255,255,.9)">LUMO</div>
<div class="lnk" style="letter-spacing:0.154px;left:175.2px;top:453.8px;font-size:11.3px">Elena Arecco Bridgmon</div>
<div class="lnk" style="letter-spacing:0.197px;left:346.2px;top:453.8px;font-size:11.3px">elena@lumoleadership.com</div>
<div class="dd" style="left:546.4px;top:453.8px">--</div>
<div class="dd" style="left:746.4px;top:453.8px">--</div>
<div class="dd" style="left:946.4px;top:453.8px">--</div>
<div class="hline" style="top:508.8px"></div>
<div class="cb" style="top:486.0px;left:101.4px;width:15.5px;height:15.2px"></div>
<div class="av" style="top:483.8px"><span>PK</span></div>
<div class="lnk" style="letter-spacing:-0.030px;left:175.2px;top:485.8px;font-size:11.3px">Penny Koch</div>
<div class="dd" style="left:346.4px;top:485.8px">--</div>
<div class="dd" style="left:546.4px;top:485.8px">--</div>
<div class="dd" style="left:746.4px;top:485.8px">--</div>
<div class="dd" style="left:946.4px;top:485.8px">--</div>
<div class="hline" style="top:540.8px"></div>
<div class="cb" style="top:518.0px;left:101.4px;width:15.5px;height:15.2px"></div>
<svg class="abs" style="left:150px;top:519.0px" width="11.2" height="11.2" viewBox="0 0 11 11"><path d="M5.5 0 L11 4.4 V11 H0 V4.4 Z" fill="#0b4fe0"/><path d="M0 5.5 L6.2 3.9 L8 2.9 L8.7 3.7 L4.6 7.6 L11 6.4 V7.9 L2.4 9.5 L1.7 8.6 L5.8 5.3 L0 6.8 Z" fill="#f4f9ff"/></svg>
<div class="lnk" style="letter-spacing:0.117px;left:175.2px;top:517.8px;font-size:11.3px">Corina Kolbe</div>
<div class="lnk" style="letter-spacing:0.216px;left:346.2px;top:517.8px;font-size:11.3px">corinak@zillowgroup.com</div>
<div class="dd" style="left:546.4px;top:517.8px">--</div>
<div class="dd" style="left:746.4px;top:517.8px">--</div>
<div class="dd" style="left:946.4px;top:517.8px">--</div>
<div class="hline" style="top:572.8px"></div>
<div class="cb" style="top:550.0px;left:101.4px;width:15.5px;height:15.2px"></div>
<div class="av" style="top:547.8px"><span>DD</span></div>
<div class="lnk" style="letter-spacing:0.104px;left:175.2px;top:549.8px;font-size:11.3px">Deb Dennis</div>
<div class="dd" style="left:346.4px;top:549.8px">--</div>
<div class="dd" style="left:546.4px;top:549.8px">--</div>
<div class="dd" style="left:746.4px;top:549.8px">--</div>
<div class="dd" style="left:946.4px;top:549.8px">--</div>
<div class="hline" style="top:604.8px"></div>
<div class="cb" style="top:582.0px;left:101.4px;width:15.5px;height:15.2px"></div>
<div class="av" style="top:579.8px;background:#e5173f;font-size:3.7px;letter-spacing:.15px;color:rgba(255,255,255,.9)">LUMO</div>
<div class="lnk" style="letter-spacing:0.182px;left:175.2px;top:581.8px;font-size:11.3px">Kristin Baker</div>
<div class="lnk" style="letter-spacing:0.181px;left:346.2px;top:581.8px;font-size:11.3px">kristin@lumoleadership.com</div>
<div class="dd" style="left:546.4px;top:581.8px">--</div>
<div class="dd" style="left:746.4px;top:581.8px">--</div>
<div class="dd" style="left:946.4px;top:581.8px">--</div>
<div class="hline" style="top:636.8px"></div>
<div class="cb" style="top:614.0px;left:101.4px;width:15.5px;height:15.2px"></div>
<div class="av" style="top:611.8px"><span>CZ</span></div>
<div class="lnk" style="letter-spacing:0.221px;left:175.2px;top:613.8px;font-size:11.3px">Carol Zizzo</div>
<div class="dd" style="left:346.4px;top:613.8px">--</div>
<div class="dd" style="left:546.4px;top:613.8px">--</div>
<div class="dd" style="left:746.4px;top:613.8px">--</div>
<div class="dd" style="left:946.4px;top:613.8px">--</div>
<div class="hline" style="top:668.8px"></div>
<div class="cb" style="top:646.0px;left:101.4px;width:15.5px;height:15.2px"></div>
<div class="av" style="top:643.8px"><span>AJ</span></div>
<div class="lnk" style="letter-spacing:0.166px;left:175.2px;top:645.8px;font-size:11.3px">Amanda Johnson</div>
<div class="lnk" style="letter-spacing:0.454px;left:346.2px;top:645.8px;font-size:11.3px">amadaj340@gmail.com</div>
<div class="txt" style="letter-spacing:-0.158px;left:546.4px;top:645.8px;font-size:11.3px">+1 (954) 887-3131</div>
<div class="dd" style="left:746.4px;top:645.8px">--</div>
<div class="txt" style="letter-spacing:0.630px;left:946px;top:645.8px;font-size:11.3px">New</div>
<div class="cb" style="top:678.0px;left:101.4px;width:15.5px;height:15.2px"></div>
<div class="abs" style="left:1099.5px;top:318px;width:10px;height:366px;background:linear-gradient(90deg,rgba(240,243,249,0),rgba(236,239,246,.7) 55%,#e2e6f0 100%)"></div>
<div class="abs" style="left:90.5px;top:671px;width:1019px;height:13.6px;background:linear-gradient(180deg,rgba(250,251,253,.25),rgba(238,241,247,.7) 50%,rgba(230,234,243,.97))"></div>
<div class="abs" style="left:140px;top:670px;width:400px;height:14.4px;overflow:hidden"><div class="av" style="left:6px;top:5.8px;background:#b3d766;opacity:.62"></div><div class="lnk" style="left:35.2px;top:7.8px;font-size:11.3px;opacity:.13;letter-spacing:.4px">Sharon Cleary</div><div class="lnk" style="left:206.2px;top:7.8px;font-size:11.3px;opacity:.12;letter-spacing:.3px">sharon@lumoleadership.com</div></div>
<div class="abs" style="left:90px;top:684.4px;width:1020px;height:1px;background:#d3dae6"></div>
<div class="abs" style="left:85px;top:685.4px;width:1030px;height:34.6px;background:#fdfdfe"></div>
<!--TABLE_END-->
<!--PAGER_START-->
<svg class="abs" style="left:441px;top:693px" width="12" height="17" viewBox="0 0 12 17"><path d="M9.8 1.2 L2.2 8.3 L9.8 15.4" stroke="#aab7ca" stroke-width="1.5" fill="none"/></svg>
<div class="lnk" style="letter-spacing:0.025px;left:463.4px;top:693.5px;font-size:11.3px;color:#aab7ca">Prev</div>
<div class="abs" style="left:493.8px;top:690.8px;width:17.2px;height:20.2px;border-radius:3px;background:#dff2f7;border:1px solid #84d2df"></div>
<div class="lnk" style="left:499px;top:693.5px;font-size:11.3px;color:#2a6f85">1</div>
<div class="lnk" style="left:526.2px;top:693.5px;font-size:11.3px">2</div>
<div class="lnk" style="left:553.2px;top:693.5px;font-size:11.3px">3</div>
<div class="lnk" style="left:580.3px;top:693.5px;font-size:11.3px">4</div>
<div class="lnk" style="letter-spacing:0.325px;left:599.4px;top:693.5px;font-size:11.3px">Next</div>
<svg class="abs" style="left:639px;top:693px" width="12" height="17" viewBox="0 0 12 17"><path d="M2.2 1.2 L9.8 8.3 L2.2 15.4" stroke="#2a8ba0" stroke-width="1.6" fill="none"/></svg>
<div class="lnk" style="letter-spacing:0.452px;left:670.5px;top:693.5px;font-size:11.3px">100 per page</div>
<div class="caret" style="left:750px;top:699.5px;border-left-width:3px;border-right-width:3px;border-top-width:3.5px;border-top-color:#6fa6b6"></div>
<!--PAGER_END-->
<!--OVERLAYS_START-->
<!-- info bubbles -->
<div class="ibub" style="left:933.3px;top:138.8px"><i></i><b></b></div>
<div class="ibub" style="left:294.8px;top:192px"><i></i><b></b></div>
<div class="abs" style="left:111.1px;top:267px;width:30.8px;height:30.8px;border-radius:50%;background:rgba(190,193,236,.55)"></div>
<div class="ibub" style="left:113.8px;top:269.7px"><i></i><b></b></div>
<!-- recorder -->
<div class="abs" style="left:55.2px;top:414px;width:46.2px;height:99.8px;border-radius:23.1px;background:#1b1b1c"></div>
<div class="abs" style="left:62.3px;top:421.2px;width:32.4px;height:32.4px;border-radius:50%;background:#e9463a"></div>
<div class="abs" style="left:72px;top:430.8px;width:13px;height:13px;border-radius:1.6px;background:#fdf6f4"></div>
<div class="abs b" style="letter-spacing:-0.051px;left:68.9px;top:460.6px;font-size:9.6px;line-height:14px;color:#f7f7f7;white-space:nowrap">4:31</div>
<div class="abs" style="left:73.4px;top:486.2px;width:4px;height:11px;border-radius:2px;background:#fbfbfb"></div>
<div class="abs" style="left:79.8px;top:486.2px;width:4px;height:11px;border-radius:2px;background:#fbfbfb"></div>
<!-- cursor -->
<svg class="abs" style="left:452.3px;top:457.8px" width="10" height="14" viewBox="0 0 10 14"><path d="M1.4 1.2 V10.6 L3.6 8.6 L5.4 12.6 L7 11.9 L5.2 8 L8.2 7.8 Z" fill="#0a0a0a" stroke="#f4f4f4" stroke-width=".7" stroke-linejoin="round"/></svg>
<!--OVERLAYS_END-->
</div>
</body></html>
